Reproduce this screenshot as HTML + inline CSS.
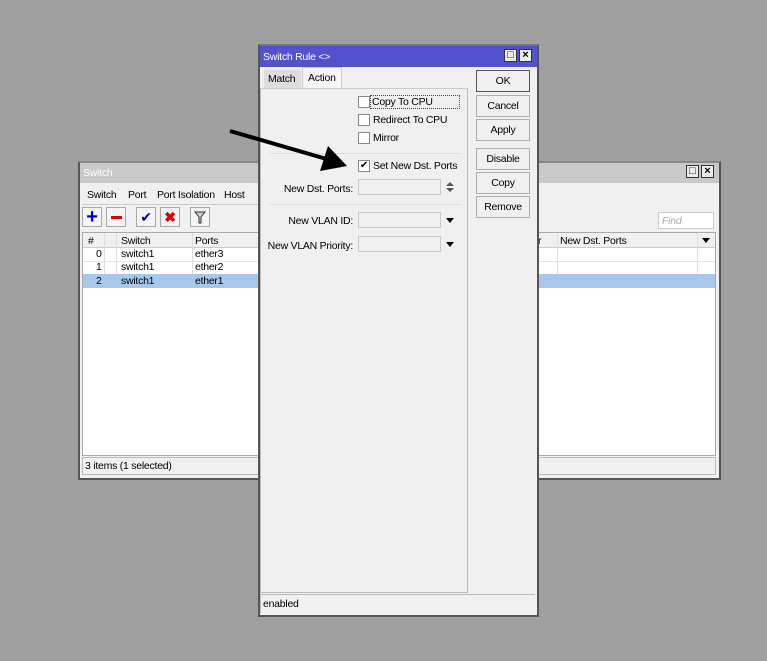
<!DOCTYPE html>
<html><head><style>
*{margin:0;padding:0;box-sizing:border-box}
body{width:767px;height:661px;background:#a0a0a0;position:relative;overflow:hidden;font-family:"Liberation Sans",sans-serif;font-size:10.5px;letter-spacing:-0.25px;color:#000}
.a{position:absolute}
.btn{position:absolute;left:476px;width:54px;height:22px;border:1px solid #adadad;background:#f0f0f0;text-align:center;line-height:20px}
.cb{position:absolute;width:12px;height:12px;border:1px solid #888;background:#fff}
.lbl{position:absolute}
.rl{position:absolute;right:414px;text-align:right;white-space:nowrap}
.inp{position:absolute;width:83px;height:16px;border:1px solid #c8c8c8;background:#f0f0f0}
.tri{position:absolute;width:0;height:0;border-left:4px solid transparent;border-right:4px solid transparent;border-top:5px solid #000}
.wb{position:absolute;width:13px;height:13px;border:1px solid #333;background:#ececec;font-size:11px;line-height:11px;text-align:center;font-weight:bold;letter-spacing:0}
</style></head><body>
<!-- Switch window -->
<div class="a" style="left:78px;top:161px;width:643px;height:319px;background:#f0f0f0;border:2px solid #555;border-top-color:#888"></div>
<div class="a" style="left:80px;top:163px;width:639px;height:20px;background:#c9c9c9;color:#fff;padding:4px 3px">Switch</div>
<div class="wb" style="left:686px;top:165px;font-weight:normal">□</div>
<div class="wb" style="left:701px;top:165px">×</div>
<div class="a" style="left:82px;top:185px;width:180px;height:20px;border-bottom:1px solid #ccc"></div>
<div class="a" style="left:87px;top:189px">Switch</div>
<div class="a" style="left:128px;top:189px">Port</div>
<div class="a" style="left:157px;top:189px">Port Isolation</div>
<div class="a" style="left:224px;top:189px">Host</div>
<div class="a" style="left:82px;top:207px;width:20px;height:20px;border:1px solid #aaa;background:#f4f4f4;color:#00c;font-size:20px;font-weight:bold;line-height:18px;text-align:center">+</div>
<div class="a" style="left:106px;top:207px;width:20px;height:20px;border:1px solid #aaa;background:#f4f4f4"><div class="a" style="left:4px;top:8px;width:11px;height:3px;background:#d00"></div></div>
<div class="a" style="left:136px;top:207px;width:20px;height:20px;border:1px solid #aaa;background:#f4f4f4;color:#00a;font-size:14px;text-align:center;line-height:18px">✔</div>
<div class="a" style="left:160px;top:207px;width:20px;height:20px;border:1px solid #aaa;background:#f4f4f4;color:#d00;font-size:14px;font-weight:bold;text-align:center;line-height:18px">✖</div>
<div class="a" style="left:190px;top:207px;width:20px;height:20px;border:1px solid #aaa;background:#f4f4f4"><svg width="18" height="18"><path d="M4 4h10l-4 5v6h-2v-6z" fill="#ccc" stroke="#333"/></svg></div>
<div class="a" style="left:658px;top:212px;width:56px;height:17px;border:1px solid #ccc;background:#fff;color:#aaa;font-style:italic;padding:2px 3px">Find</div>
<div class="a" style="left:82px;top:232px;width:634px;height:224px;background:#fff;border:1px solid #aaa"></div>
<div class="a" style="left:83px;top:233px;width:632px;height:15px;background:#f0f0f0;border-bottom:1px solid #ccc"></div>
<div class="a" style="left:88px;top:235px">#</div>
<div class="a" style="left:121px;top:235px">Switch</div>
<div class="a" style="left:195px;top:235px">Ports</div>
<div class="a" style="left:538px;top:235px">r</div>
<div class="a" style="left:560px;top:235px">New Dst. Ports</div>
<div class="a" style="left:104px;top:233px;width:1px;height:55px;background:#ddd"></div>
<div class="a" style="left:116px;top:233px;width:1px;height:55px;background:#ddd"></div>
<div class="a" style="left:192px;top:233px;width:1px;height:55px;background:#ddd"></div>
<div class="a" style="left:557px;top:233px;width:1px;height:55px;background:#ddd"></div>
<div class="a" style="left:697px;top:233px;width:1px;height:55px;background:#ddd"></div>
<div class="tri" style="left:702px;top:238px"></div>
<div class="a" style="left:83px;top:261px;width:632px;height:1px;background:#e4e4e4"></div>
<div class="a" style="left:83px;top:274px;width:632px;height:14px;background:#a6c8ea"></div>
<div class="a" style="left:96px;top:248px">0</div><div class="a" style="left:121px;top:248px">switch1</div><div class="a" style="left:195px;top:248px">ether3</div>
<div class="a" style="left:96px;top:261px">1</div><div class="a" style="left:121px;top:261px">switch1</div><div class="a" style="left:195px;top:261px">ether2</div>
<div class="a" style="left:96px;top:275px">2</div><div class="a" style="left:121px;top:275px">switch1</div><div class="a" style="left:195px;top:275px">ether1</div>
<div class="a" style="left:82px;top:457px;width:634px;height:18px;border:1px solid #bbb;padding:2px 2px">3 items (1 selected)</div>

<!-- Dialog -->
<div class="a" style="left:258px;top:44px;width:281px;height:573px;background:#f0f0f0;border:2px solid #555;border-top-color:#777"></div>
<div class="a" style="left:260px;top:46px;width:277px;height:21px;background:#5252cc;color:#fff;padding:5px 3px">Switch Rule &lt;&gt;</div>
<div class="wb" style="left:504px;top:49px;font-weight:normal">□</div>
<div class="wb" style="left:519px;top:49px">×</div>
<div class="a" style="left:264px;top:70px;width:37px;height:18px;background:#ddd;padding:3px 4px">Match</div>
<div class="a" style="left:302px;top:67px;width:40px;height:22px;background:#f6f6f6;border:1px solid #ccc;border-bottom:none;padding:4px 5px">Action</div>
<div class="a" style="left:260px;top:88px;width:208px;height:505px;border:1px solid #bbb;border-top:1px solid #ccc"></div>
<div class="cb" style="left:358px;top:96px"></div>
<div class="lbl" style="left:370px;top:95px;border:1px dotted #444;padding:0 1px;width:90px">Copy To CPU</div>
<div class="cb" style="left:358px;top:114px"></div><div class="lbl" style="left:373px;top:114px">Redirect To CPU</div>
<div class="cb" style="left:358px;top:132px"></div><div class="lbl" style="left:373px;top:132px">Mirror</div>
<div class="a" style="left:270px;top:153px;width:190px;height:1px;background:#ddd"></div>
<div class="cb" style="left:358px;top:160px;font-size:10px;line-height:10px;text-align:center">✔</div><div class="lbl" style="left:373px;top:160px">Set New Dst. Ports</div>
<div class="rl" style="top:183px">New Dst. Ports:</div>
<div class="inp" style="left:358px;top:179px"></div>
<div class="a" style="left:446px;top:182px;width:0;height:0;border-left:4px solid transparent;border-right:4px solid transparent;border-bottom:4px solid #555"></div>
<div class="a" style="left:446px;top:188px;width:0;height:0;border-left:4px solid transparent;border-right:4px solid transparent;border-top:4px solid #555"></div>
<div class="a" style="left:270px;top:204px;width:190px;height:1px;background:#ddd"></div>
<div class="rl" style="top:215px">New VLAN ID:</div>
<div class="inp" style="left:358px;top:212px"></div>
<div class="tri" style="left:446px;top:218px"></div>
<div class="rl" style="top:240px">New VLAN Priority:</div>
<div class="inp" style="left:358px;top:236px"></div>
<div class="tri" style="left:446px;top:242px"></div>
<div class="btn" style="top:70px;border-color:#555">OK</div>
<div class="btn" style="top:95px">Cancel</div>
<div class="btn" style="top:119px">Apply</div>
<div class="btn" style="top:148px">Disable</div>
<div class="btn" style="top:172px">Copy</div>
<div class="btn" style="top:196px">Remove</div>
<div class="a" style="left:260px;top:594px;width:275px;height:19px;border:1px solid #bbb;border-right:none;border-bottom:none;padding:3px 2px">enabled</div>

<!-- Arrow on top -->
<svg class="a" style="left:0;top:0" width="767" height="661"><line x1="230" y1="131" x2="330" y2="160" stroke="#000" stroke-width="4"/><polygon points="347,166 320,171 328,146" fill="#000"/></svg>
</body></html>
